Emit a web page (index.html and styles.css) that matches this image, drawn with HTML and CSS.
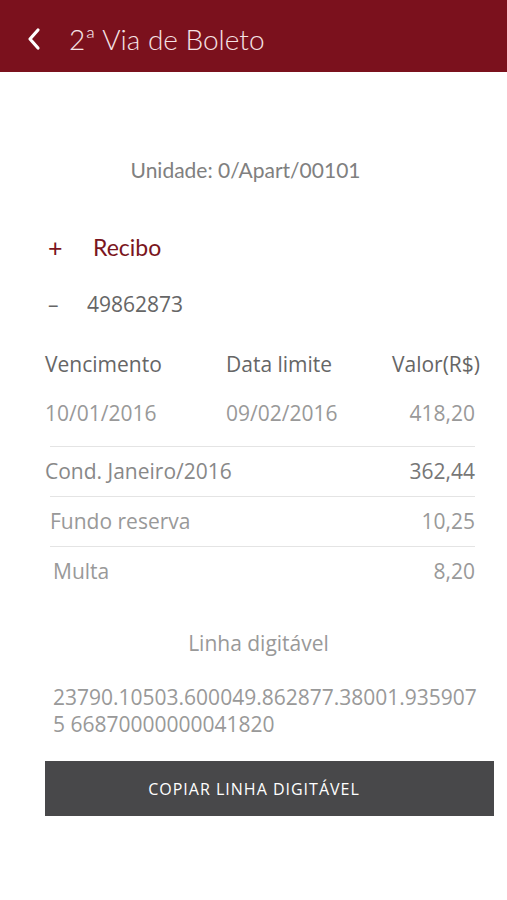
FILE: index.html
```html
<!DOCTYPE html>
<html lang="pt-BR">
<head>
    <meta charset="UTF-8">
    <meta name="viewport" content="width=device-width, initial-scale=1.0">
    <title>2ª Via de Boleto</title>
    <link rel="stylesheet" href="styles.css">
</head>
<body>
    <header class="topbar">
        <svg class="back" viewBox="0 0 16 24" width="16" height="24">
            <path d="M12 3 L4 12 L12 21" fill="none" stroke="#fff" stroke-width="3.2" stroke-linecap="round" stroke-linejoin="round"/>
        </svg>
        <h1>2ª Via de Boleto</h1>
    </header>

    <main class="content">
        <p class="unit">Unidade: 0/Apart/00101</p>

        <div class="toggle recibo">
            <span class="sign">+</span>
            <span>Recibo</span>
        </div>
        <div class="toggle number">
            <span class="sign">–</span>
            <span>49862873</span>
        </div>

        <div class="table">
            <div class="row head">
                <span>Vencimento</span>
                <span>Data limite</span>
                <span class="num">Valor(R$)</span>
            </div>
            <div class="row first">
                <span>10/01/2016</span>
                <span>09/02/2016</span>
                <span class="num">418,20</span>
            </div>
        </div>

        <div class="items">
            <div class="item cond">
                <span>Cond. Janeiro/2016</span>
                <span>362,44</span>
            </div>
            <div class="item fundo">
                <span>Fundo reserva</span>
                <span>10,25</span>
            </div>
            <div class="item multa">
                <span>Multa</span>
                <span>8,20</span>
            </div>
        </div>

        <p class="line-title">Linha digitável</p>
        <p class="code">23790.10503.600049.862877.38001.935907<br>5 66870000000041820</p>

        <button type="button" class="copy">COPIAR LINHA DIGITÁVEL</button>
    </main>
</body>
</html>
```

FILE: styles.css
```css
body {
    margin: 0;
    background: #fff;
    font-family: "Open Sans", "Noto Sans", sans-serif;
    color: #777;
}
.topbar {
    height: 72px;
    background-color: #7b111d;
    display: flex;
    align-items: center;
    padding: 6px 0 0 26px;
    box-sizing: border-box;
}
.back {
    margin-right: 27px;
}
.topbar h1 {
    margin: 0;
    font-family: Lato, sans-serif;
    font-weight: 300;
    font-size: 28px;
    color: #f5e3e5;
}
.content {
    padding: 0 27px 0 45px;
}
.unit {
    margin: 86px 0 0;
    padding-right: 34px;
    text-align: center;
    font-family: Lato, sans-serif;
    font-size: 21px;
    line-height: 24px;
    color: #808080;
}
.toggle {
    display: flex;
    align-items: center;
    line-height: 24px;
    padding-left: 3px;
}
.recibo {
    margin-top: 53px;
    font-family: Lato, sans-serif;
    font-size: 23px;
    color: #7a1520;
}
.recibo .sign {
    width: 45px;
    font-size: 25px;
}
.number {
    margin-top: 33px;
    font-size: 21px;
    color: #666;
}
.number .sign {
    width: 39px;
}
.table {
    margin-top: 36px;
}
.row {
    display: grid;
    grid-template-columns: 181px 1fr auto;
    font-size: 21px;
    line-height: 24px;
}
.head {
    color: #666;
}
.first {
    margin-top: 25px;
    color: #999;
    padding-bottom: 21px;
}
.first .num {
    padding-right: 5px;
}
.items {
    margin: 0 5px;
    border-top: 1.5px solid #e4e4e4;
}
.item {
    display: flex;
    justify-content: space-between;
    font-size: 21px;
    line-height: 24px;
    padding: 12px 0 13px;
    color: #999;
}
.item + .item {
    border-top: 1.5px solid #e4e4e4;
}
.cond {
    margin-left: -5px;
    color: #888;
}
.cond span:last-child {
    color: #777;
}
.multa {
    padding-left: 3px;
}
.line-title {
    margin: 35px 0 0;
    padding-right: 8px;
    text-align: center;
    font-size: 21px;
    line-height: 24px;
    color: #999;
}
.code {
    margin: 29px 0 0;
    padding-left: 8px;
    font-size: 21px;
    line-height: 27px;
    color: #999;
}
.copy {
    display: block;
    width: calc(100% + 14px);
    height: 55px;
    margin-top: 23px;
    padding: 0 31px 0 0;
    border: none;
    background-color: #48484a;
    color: #fff;
    font-family: "Open Sans", sans-serif;
    font-size: 16px;
    letter-spacing: 1px;
    cursor: pointer;
}
```
